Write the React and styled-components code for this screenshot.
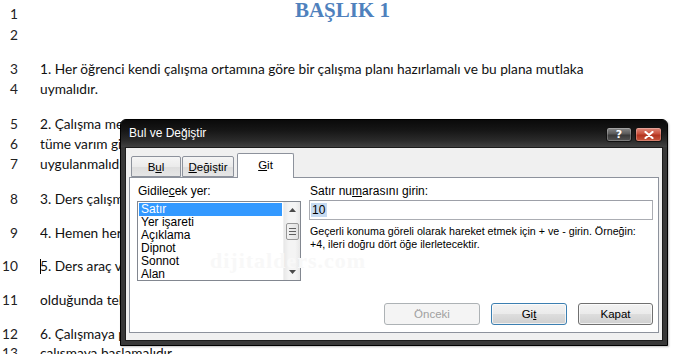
import React from "react";
import styled, { createGlobalStyle } from "styled-components";

const GlobalStyle = createGlobalStyle`
  html, body { margin: 0; padding: 0; background: #ffffff; overflow: hidden; }
  * { box-sizing: border-box; }
`;

const Page = styled.div`
  position: relative;
  width: 675px;
  height: 354px;
  overflow: hidden;
  background: #ffffff;
`;

const Doc = styled.div`
  display: flex;
  flex-direction: column;
  padding-top: 3px;
  font-family: "Lato", "Liberation Sans", sans-serif;
  font-size: 13.7px;
  color: #111111;
`;

const Row = styled.div`
  display: flex;
  align-items: center;
  height: 20px;
  flex: none;
  margin-top: ${(p) => p.$gap || 0}px;
`;

const LineNo = styled.span`
  width: 18px;
  text-align: right;
  flex: none;
  color: #222222;
`;

const TextLine = styled.span`
  margin-left: 22px;
  width: 620px;
  white-space: nowrap;
  overflow: hidden;
`;

const Heading = styled.span`
  margin-left: 22px;
  width: 605px;
  text-align: center;
  margin-top: -5px;
  font-family: "Liberation Serif", serif;
  font-weight: bold;
  font-size: 21px;
  color: #4f81bd;
`;

const Caret = styled.span`
  display: inline-block;
  width: 1px;
  height: 15px;
  background: #000;
  margin-right: -1px;
  vertical-align: -3px;
`;

const Squiggle = styled.span`
  text-decoration: underline wavy #3f9a3f;
  text-decoration-thickness: 1px;
  text-underline-offset: 3px;
`;

/* ---------- dialog ---------- */

const Dialog = styled.div`
  position: absolute;
  left: 120px;
  top: 119px;
  width: 548px;
  height: 227px;
  display: flex;
  flex-direction: column;
  border: 1px solid #000;
  border-radius: 6px 6px 0 0;
  background: #383838;
  padding: 0 4px 4px;
  font-family: "Liberation Sans", "DejaVu Sans", sans-serif;
  font-size: 11px;
  color: #000;
  box-shadow: 1px 1px 2px rgba(0, 0, 0, 0.25);
`;

const TitleBar = styled.div`
  display: flex;
  align-items: center;
  height: 27px;
  margin: 0 -4px;
  padding: 0 5px 0 8px;
  border-radius: 5px 5px 0 0;
  background: linear-gradient(180deg, #0a0a0a 0%, #171717 40%, #2a2a2a 75%, #404040 100%);
  flex: none;
`;

const Title = styled.span`
  color: #ffffff;
  font-size: 12px;
  margin-top: -2px;
`;

const CapButtons = styled.div`
  display: flex;
  gap: 3px;
  margin-left: auto;
  margin-top: 2px;
`;

const CapButton = styled.div`
  width: ${(p) => p.$w}px;
  height: 15px;
  border: 1px solid #111;
  border-radius: 3px;
  display: flex;
  align-items: center;
  justify-content: center;
  color: #fff;
  font-family: "DejaVu Sans", sans-serif;
  font-weight: bold;
  font-size: 11px;
  background: ${(p) =>
    p.$close
      ? "linear-gradient(180deg, #e08a7c 0%, #c9503c 45%, #b23420 55%, #c9583f 100%)"
      : "linear-gradient(180deg, #8a8a8a 0%, #5a5a5a 45%, #3a3a3a 55%, #555 100%)"};
  box-shadow: inset 0 0 0 1px rgba(255, 255, 255, 0.25);
`;

const Body = styled.div`
  flex: 1;
  display: flex;
  flex-direction: column;
  background: #f0f0f0;
  border: 1px solid #1c1c1c;
  padding: 5px 3px 7px 3px;
`;

const Tabs = styled.div`
  display: flex;
  align-items: flex-end;
  padding-left: 2px;
  height: 24px;
  flex: none;
  position: relative;
  z-index: 1;
`;

const Tab = styled.div`
  height: ${(p) => (p.$active ? 25 : 21)}px;
  width: ${(p) => p.$w}px;
  display: flex;
  align-items: center;
  justify-content: center;
  border: 1px solid #8d929c;
  border-bottom: ${(p) => (p.$active ? "none" : "1px solid #8d929c")};
  border-radius: 2px 2px 0 0;
  margin-right: ${(p) => (p.$active ? 0 : 1)}px;
  margin-left: ${(p) => (p.$active ? 2 : 0)}px;
  padding-bottom: ${(p) => (p.$active ? 3 : 0)}px;
  margin-bottom: ${(p) => (p.$active ? -1 : 0)}px;
  background: ${(p) =>
    p.$active ? "#ffffff" : "linear-gradient(180deg, #f5f5f5 0%, #ebebeb 50%, #dddddd 51%, #e6e6e6 100%)"};
  font-size: 11.5px;
`;

const U = styled.span`
  text-decoration: underline;
  text-underline-offset: 1px;
`;

const Panel = styled.div`
  position: relative;
  flex: 1;
  display: flex;
  flex-direction: column;
  background: #ffffff;
  border: 1px solid #8d929c;
  padding: 7px 5px 7px 7px;
`;

const Columns = styled.div`
  display: flex;
  gap: 8px;
`;

const LeftCol = styled.div`
  width: 164px;
  flex: none;
  display: flex;
  flex-direction: column;
`;

const RightCol = styled.div`
  flex: 1;
  display: flex;
  flex-direction: column;
`;

const Label = styled.div`
  line-height: 13px;
  height: 13px;
  margin-left: 1px;
  font-size: 12px;
  white-space: nowrap;
`;

const ListBox = styled.div`
  margin-top: 3px;
  height: 80px;
  display: flex;
  border: 1px solid #828790;
  background: #fff;
`;

const Items = styled.div`
  flex: 1;
  padding: 1px 1px 0 1px;
  display: flex;
  flex-direction: column;
  font-size: 12px;
`;

const Item = styled.div`
  height: 13px;
  line-height: 13px;
  padding-left: 2px;
  background: ${(p) => (p.$sel ? "#3399ff" : "transparent")};
  color: ${(p) => (p.$sel ? "#ffffff" : "#000")};
  white-space: nowrap;
`;

const ScrollBar = styled.div`
  width: 17px;
  flex: none;
  display: flex;
  flex-direction: column;
  align-items: center;
  background: linear-gradient(90deg, #e8e8e8, #f4f4f4 30%, #f4f4f4 70%, #e8e8e8);
  border-left: 1px solid #f0f0f0;
`;

const Arrow = styled.svg`
  width: 7px;
  height: 4px;
  flex: none;
`;

const Thumb = styled.div`
  width: 13px;
  height: 17px;
  margin-top: 11px;
  border: 1px solid #989898;
  border-radius: 2px;
  background: linear-gradient(90deg, #f2f2f2, #e2e2e2);
  display: flex;
  flex-direction: column;
  align-items: center;
  justify-content: center;
  gap: 2px;
`;

const Grip = styled.div`
  width: 7px;
  height: 1px;
  background: #606060;
`;

const Input = styled.div`
  margin-top: 2px;
  height: 20px;
  border: 1px solid #abadb3;
  border-top-color: #9da0a8;
  display: flex;
  align-items: center;
  padding-left: 1px;
  font-size: 12px;
`;

const Selected = styled.span`
  background: #c6dbf2;
  line-height: 14px;
  padding: 0 2px 0 1px;
`;

const Help = styled.div`
  margin-top: 5px;
  line-height: 13px;
  margin-left: 1px;
  font-size: 10.7px;
  white-space: nowrap;
`;

const Watermark = styled.div`
  position: absolute;
  left: 80px;
  top: 70px;
  font-family: "Liberation Serif", serif;
  font-weight: bold;
  font-size: 22px;
  letter-spacing: 1px;
  color: #f8f8f8;
  pointer-events: none;
`;

const ButtonRow = styled.div`
  margin-top: auto;
  display: flex;
  justify-content: flex-end;
  gap: 11px;
`;

const Button = styled.div`
  width: ${(p) => p.$w}px;
  height: 22px;
  display: flex;
  align-items: center;
  justify-content: center;
  font-size: 11.5px;
  border: 1px solid ${(p) => (p.$disabled ? "#adb2b5" : p.$default ? "#3c7fb1" : "#707070")};
  border-radius: 3px;
  color: ${(p) => (p.$disabled ? "#a0a0a0" : "#000")};
  background: ${(p) =>
    p.$disabled
      ? "#f4f4f4"
      : "linear-gradient(180deg, #f2f2f2 0%, #ebebeb 48%, #dddddd 52%, #cfcfcf 100%)"};
  box-shadow: ${(p) => (p.$disabled ? "none" : "inset 0 0 0 1px rgba(255,255,255,0.7)")};
`;

const rows = [
  { n: 1, gap: 0, heading: "BAŞLIK 1" },
  { n: 2, gap: 1, text: "" },
  { n: 3, gap: 14, text: "1. Her öğrenci kendi çalışma ortamına göre bir çalışma planı hazırlamalı ve bu plana mutlaka" },
  { n: 4, gap: 0, text: "uymalıdır." },
  { n: 5, gap: 15, text: "2. Çalışma metodu olarak önce bütünü görmek sonra ayrıntılara inmek yani tümdengelim ya da" },
  { n: 6, gap: 0, text: "tüme varım gibi yöntemlerden hangisi size uygunsa o yöntem seçilmeli ve çalışırken" },
  { n: 7, gap: 0, text: "uygulanmalıdır." },
  { n: 8, gap: 15, text: "3. Ders çalışmaya başlamadan önce gerekli tüm araç ve gereçler hazırlanmalıdır." },
  { n: 9, gap: 14, text: "4. Hemen her gün düzenli olarak tekrar yapılmalıdır." },
  { n: 10, gap: 13, caret: true, text: "5. Ders araç ve gereçleri eksiksiz olmalı, bunlar hazır" },
  { n: 11, gap: 14, squiggle: "olduğunda", text: " tekrar kontrol edilmelidir." },
  { n: 12, gap: 14, text: "6. Çalışmaya planlanan saatte oturulmalı ve hiç vakit kaybetmeden" },
  { n: 13, gap: -1, text: "çalışmaya başlamalıdır." },
];

const listItems = ["Satır", "Yer işareti", "Açıklama", "Dipnot", "Sonnot", "Alan"];

export default function App() {
  return (
    <Page>
      <GlobalStyle />
      <Doc>
        {rows.map((r) => (
          <Row key={r.n} $gap={r.gap}>
            <LineNo>{r.n}</LineNo>
            {r.heading ? (
              <Heading>{r.heading}</Heading>
            ) : (
              <TextLine>
                {r.caret && <Caret />}
                {r.squiggle && <Squiggle>{r.squiggle}</Squiggle>}
                {r.text}
              </TextLine>
            )}
          </Row>
        ))}
      </Doc>

      <Dialog>
        <TitleBar>
          <Title>Bul ve Değiştir</Title>
          <CapButtons>
            <CapButton $w={26}>?</CapButton>
            <CapButton $w={27} $close>
              <svg width="10" height="8" viewBox="0 0 10 8">
                <path d="M1.5 1 L8.5 7 M8.5 1 L1.5 7" stroke="#fff" strokeWidth="2.2" strokeLinecap="round" />
              </svg>
            </CapButton>
          </CapButtons>
        </TitleBar>
        <Body>
          <Tabs>
            <Tab $w={50}>
              B<U>u</U>l
            </Tab>
            <Tab $w={52}>
              <U>D</U>eğiştir
            </Tab>
            <Tab $w={57} $active>
              <U>G</U>it
            </Tab>
          </Tabs>
          <Panel>
            <Watermark>dijitalders.com</Watermark>
            <Columns>
              <LeftCol>
                <Label>
                  Gidile<U>c</U>ek yer:
                </Label>
                <ListBox>
                  <Items>
                    {listItems.map((it, i) => (
                      <Item key={it} $sel={i === 0}>
                        {it}
                      </Item>
                    ))}
                  </Items>
                  <ScrollBar>
                    <Arrow viewBox="0 0 7 4" style={{ marginTop: 6 }}>
                      <path d="M0 4 L3.5 0 L7 4 Z" fill="#4a4a4a" />
                    </Arrow>
                    <Thumb>
                      <Grip />
                      <Grip />
                      <Grip />
                    </Thumb>
                    <Arrow viewBox="0 0 7 4" style={{ marginTop: "auto", marginBottom: 6 }}>
                      <path d="M0 0 L3.5 4 L7 0 Z" fill="#4a4a4a" />
                    </Arrow>
                  </ScrollBar>
                </ListBox>
              </LeftCol>
              <RightCol>
                <Label>
                  Satır nu<U>m</U>arasını girin:
                </Label>
                <Input>
                  <Selected>10</Selected>
                </Input>
                <Help>
                  Geçerli konuma göreli olarak hareket etmek için + ve - girin. Örneğin:
                  <br />
                  +4, ileri doğru dört öğe ilerletecektir.
                </Help>
              </RightCol>
            </Columns>
            <ButtonRow>
              <Button $w={96} $disabled>
                Önceki
              </Button>
              <Button $w={76} $default>
                Gi<U>t</U>
              </Button>
              <Button $w={75}>Kapat</Button>
            </ButtonRow>
          </Panel>
        </Body>
      </Dialog>
    </Page>
  );
}
